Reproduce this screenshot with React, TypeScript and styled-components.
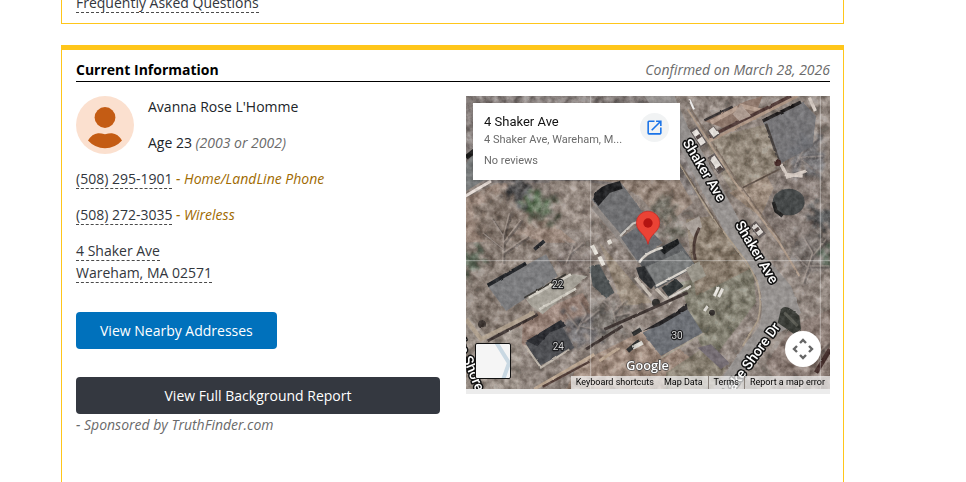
import React from "react";
import styled, { createGlobalStyle } from "styled-components";

const GlobalStyle = createGlobalStyle`
  *, *::before, *::after { box-sizing: border-box; }
  body {
    margin: 0;
    background: #fff;
    color: #212529;
    font-family: "Open Sans", "Noto Sans", sans-serif;
    font-size: 14px;
    line-height: 22px;
  }
`;

const Page = styled.main`
  display: flex;
  flex-direction: column;
  gap: 21px;
  height: 100vh;
  overflow: hidden;
  padding: 0 122px 0 61px;
`;

const Card = styled.section<{ $accent?: boolean }>`
  border: 1px solid #ffc61a;
  padding: 9px 13px 9px 14px;
  ${(p) =>
    p.$accent
      ? "flex: 1 0 auto; border-top-width: 5px; border-bottom: 0;"
      : "margin-top: -18px;"}
`;

const CardHeader = styled.header`
  display: flex;
  justify-content: space-between;
  align-items: baseline;
  border-bottom: 1px solid #000;
  margin-bottom: 14px;
`;

const CardTitle = styled.h2`
  margin: 0;
  color: #000;
  font-size: 14px;
  font-weight: 700;
`;

const Note = styled.em<{ $tone?: "gold" }>`
  color: ${(p) => (p.$tone === "gold" ? "#a06a00" : "#6a6a6a")};
`;

const DashedLink = styled.a`
  color: #32363c;
  text-decoration: none;
  border-bottom: 1px dashed #4a4a4a;
`;

const Columns = styled.div`
  display: grid;
  grid-template-columns: minmax(0, 1fr) minmax(0, 1fr);
  gap: 26px;
  align-items: start;
`;

const Details = styled.div`
  display: flex;
  flex-direction: column;
  gap: 14px;
`;

const Person = styled.div`
  display: flex;
  gap: 14px;
`;

const AvatarIcon = styled.svg`
  flex: none;
  width: 58px;
  height: 58px;
`;

const PersonLines = styled.div`
  display: flex;
  flex-direction: column;
  gap: 14px;
`;

const Line = styled.div``;

const Address = styled.address`
  font-style: normal;
`;

const Actions = styled.div`
  display: flex;
  flex-direction: column;
  align-items: flex-start;
  gap: 28px;
  margin-top: 14px;
`;

const Sponsored = styled.div`
  width: 100%;
`;

const ActionButton = styled.button<{ $dark?: boolean }>`
  display: block;
  height: 37px;
  padding: 0 24px;
  border: 0;
  border-radius: 4px;
  font: inherit;
  font-weight: 500;
  color: #fff;
  cursor: pointer;
  background: ${(p) => (p.$dark ? "#343840" : "#0071bc")};
  width: ${(p) => (p.$dark ? "100%" : "auto")};
`;

const MapFrame = styled.div`
  background: #ececec;
  padding-bottom: 5px;
`;

const MapCanvas = styled.div`
  position: relative;
  height: 293px;
  overflow: hidden;
  font-family: Roboto, sans-serif;
`;

const Satellite = styled.svg`
  display: block;
  width: 100%;
  height: 100%;
`;

const PlaceCard = styled.div`
  position: absolute;
  top: 7px;
  left: 7px;
  width: 207px;
  padding: 10px 11px 11px;
  display: flex;
  justify-content: space-between;
  background: #fff;
  box-shadow: 0 1px 4px -1px rgba(0, 0, 0, 0.3);
`;

const PlaceText = styled.div`
  min-width: 0;
  color: #6b6b6b;
  font-size: 11px;
  line-height: 18px;
`;

const PlaceName = styled.div`
  color: #111;
  font-size: 13px;
`;

const PlaceReviews = styled.div`
  margin-top: 4px;
  line-height: 16px;
`;

const OpenLink = styled.a`
  flex: none;
  display: grid;
  place-items: center;
  width: 29px;
  height: 29px;
  border-radius: 50%;
  background: #f1f3f4;
`;

const Thumbnail = styled.button`
  position: absolute;
  left: 9px;
  bottom: 10px;
  width: 36px;
  height: 36px;
  padding: 0;
  border: 1px solid #111;
  border-radius: 2px;
  overflow: hidden;
  background: #f5f5f5;
`;

const CameraButton = styled.button`
  position: absolute;
  right: 9px;
  bottom: 22px;
  width: 36px;
  height: 36px;
  padding: 0;
  border: 0;
  border-radius: 50%;
  display: grid;
  place-items: center;
  background: #fff;
`;

const Attribution = styled.div`
  position: absolute;
  right: 0;
  bottom: 0;
  display: flex;
  background: rgba(245, 245, 245, 0.7);
  font-size: 9px;
  line-height: 13px;
`;

const AttributionLink = styled.a<{ $divided?: boolean }>`
  padding: 0 5px;
  color: #000;
  text-decoration: none;
  border-left: ${(p) => (p.$divided ? "1px solid #8a827c" : "0")};
`;

const MapLabel = styled.text`
  font-family: Roboto, sans-serif;
  font-size: 42px;
  font-weight: 500;
  fill: #fff;
  stroke: #111;
  stroke-width: 9px;
  stroke-linejoin: round;
  paint-order: stroke;
  text-anchor: middle;
  dominant-baseline: central;
`;

const HouseNumber = styled(MapLabel)`
  font-size: 30px;
  font-weight: 400;
  fill: #d6d6d6;
  stroke: #1d1d1f;
  stroke-width: 7px;
`;

const Logo = styled.text`
  font-family: "Open Sans", sans-serif;
  font-size: 38px;
  font-weight: 600;
  fill: #fff;
  stroke: #444;
  stroke-width: 4px;
  paint-order: stroke;
`;

const treeSpots: [number, number, number, string][] = [
  [110, 370, 85, "#7d6e63"],
  [230, 340, 45, "#59604f"],
  [160, 285, 40, "#34373b"],
  [200, 325, 28, "#4f754e"],
  [240, 340, 14, "#4f754e"],
  [320, 500, 45, "#80746f"],
  [430, 670, 55, "#77736e"],
  [340, 700, 50, "#65656a"],
  [1030, 180, 55, "#6b6d73"],
  [1040, 470, 65, "#77706c"],
  [1070, 365, 38, "#353b3f"],
  [590, 340, 35, "#66665a"],
  [625, 400, 32, "#66665a"],
  [10, 490, 35, "#4e6550"],
  [1080, 480, 25, "#4b6351"],
];

const branches = [
  "M110 500L112 420L75 365M112 440L165 370M112 460L50 410M112 420L130 350M112 470L185 420",
  "M985 215L1010 165L995 105M1010 165L1055 125M1000 185L1070 180M1010 160L960 120M1005 190L1040 220",
  "M330 710L360 650L340 615M350 680L400 640M340 700L300 650M345 690L385 700",
  "M1010 560L1040 470L1010 420M1040 480L1080 430M1030 510L1090 510M1030 520L980 470",
  "M450 690L440 640L405 610M440 650L480 610M445 660L490 650",
  "M300 500L320 450L290 430M315 470L350 440",
  "M1060 790L1020 740M1040 760L1040 720M1050 780L1085 740",
];

function SatelliteView() {
  return (
    <Satellite
      viewBox="0 0 1092 879"
      preserveAspectRatio="xMidYMid slice"
      role="img"
      aria-label="Satellite map of 4 Shaker Ave"
    >
      <defs>
        <filter id="rough" x="0" y="0" width="1092" height="879" filterUnits="userSpaceOnUse" colorInterpolationFilters="sRGB">
          <feTurbulence type="fractalNoise" baseFrequency="0.05" numOctaves="2" seed="4" result="n" />
          <feDisplacementMap in="SourceGraphic" in2="n" scale="6" xChannelSelector="R" yChannelSelector="G" result="d" />
          <feGaussianBlur in="d" stdDeviation="1.6" />
        </filter>
        <filter id="foliage" x="-30%" y="-30%" width="160%" height="160%" colorInterpolationFilters="sRGB">
          <feTurbulence type="fractalNoise" baseFrequency="0.04" numOctaves="4" seed="9" result="n" />
          <feDisplacementMap in="SourceGraphic" in2="n" scale="120" xChannelSelector="R" yChannelSelector="G" result="d" />
          <feGaussianBlur in="d" stdDeviation="4" />
        </filter>
        <filter id="soil" x="0" y="0" width="100%" height="100%" colorInterpolationFilters="sRGB">
          <feTurbulence type="fractalNoise" baseFrequency="0.035" numOctaves="4" seed="21" />
          <feColorMatrix values="2.2 0 0 0 -0.56  2.2 0 0 0 -0.6  2.2 0 0 0 -0.62  0 0 0 0 0.27" />
        </filter>
        <filter id="grain" x="0" y="0" width="100%" height="100%" colorInterpolationFilters="sRGB">
          <feTurbulence type="fractalNoise" baseFrequency="0.07" numOctaves="3" seed="33" />
          <feColorMatrix values="1.6 0 0 0 -0.25  1.6 0 0 0 -0.27  1.6 0 0 0 -0.29  0 0 0 0 0.12" />
        </filter>
      </defs>

      <rect width="1092" height="879" fill="#93877f" />
      <g filter="url(#rough)">
        <path d="M-10 310L110 255L330 440L210 440L120 520L-10 560Z" fill="#a48c7d" />
        <path d="M-10 440L210 430L330 540L370 620L0 760Z" fill="#897c72" />
        <path d="M640 560L860 500L870 620L740 790L700 740Z" fill="#80806d" />
        <path d="M660 370L740 360L850 520L690 600Z" fill="#8b7c68" />
        <path d="M720 130L900 85L940 200L900 250L800 290L740 190Z" fill="#928674" />
        <path d="M790 290L900 235L930 290L930 370L880 360Z" fill="#a38e7b" />
        <path d="M400 440L520 580L560 620L470 630Z" fill="#9a8a76" />
        <path d="M120 690L350 590L390 660L200 780Z" fill="#997d70" />
        <path d="M340 800L560 690L690 800L640 879L300 879Z" fill="#a88e7d" />
        <path d="M600 830L720 750L780 820L740 879H600Z" fill="#8a826f" />
        <path d="M0 0H610L640 100L700 300L380 260L0 260Z" fill="#857e7d" />
        <path d="M360 250L640 250L680 320L600 390L520 300L450 260Z" fill="#978374" />
        <path d="M250 255H375V400L270 400Z" fill="#998b81" />
        <path d="M0 630L60 720L170 690L160 879H0Z" fill="#a0958b" />
        <path d="M980 690L1092 640V879H940L900 800Z" fill="#8b7971" />
        <path d="M940 240L1050 230L1092 400L980 450L880 370Z" fill="#897d77" />
      </g>

      <g filter="url(#foliage)">
        {treeSpots.map(([x, y, r, fill], i) => (
          <circle key={i} cx={x} cy={y} r={r} fill={fill} />
        ))}
      </g>
      <rect width="1092" height="879" filter="url(#soil)" />

      <g filter="url(#rough)" fill="none">
        {branches.map((d, i) => (
          <g key={i}>
            <path d={d} stroke="#3b3738" strokeOpacity="0.4" strokeWidth="6" transform="translate(5 4)" />
            <path d={d} stroke="#b7aaa2" strokeOpacity="0.6" strokeWidth="4" />
          </g>
        ))}
      </g>

      <g filter="url(#rough)">
        <path d="M535 0H625L665 90L760 260L850 430L915 500L975 570L1005 650L960 700L900 730L850 800L810 879H745L820 770L880 690Q900 610 870 540L800 450L700 270L635 140Z" fill="#989492" />
        <path d="M638 200L730 350L820 470Q905 570 875 675L830 750" fill="none" stroke="#b0a08c" strokeWidth="5" />
        <path d="M650 215L770 405" fill="none" stroke="#6b5d51" strokeWidth="4" />
        <path d="M665 40L800 250L940 440L1000 540" fill="none" stroke="#b29d8b" strokeWidth="6" />
        <path d="M675 40L810 250L945 435" fill="none" stroke="#7a6a5f" strokeWidth="4" />
        <path d="M830 275L940 220" stroke="#57493f" strokeWidth="5" />
        <path d="M0 205L22 170V245L55 252L0 285Z" fill="#777b7c" />
        <path d="M-5 302L75 255" stroke="#eee4de" strokeWidth="9" />
        <path d="M0 185L25 165" stroke="#181818" strokeWidth="15" />

        <path d="M715 75L840 15L890 0L870 50L770 95Z" fill="#8d7467" />
        <path d="M735 80L815 35M820 28L890 45L975 5" stroke="#b9a090" strokeWidth="13" fill="none" />
        <path d="M730 135L880 58L995 0" stroke="#b09684" strokeWidth="9" fill="none" />
        <path d="M730 122L880 47L975 0" stroke="#4b3330" strokeWidth="10" fill="none" />
        <path d="M715 73L800 32" stroke="#302b2c" strokeWidth="7" />
        <path d="M800 55L825 25L855 60L820 75Z" fill="#b3a095" />

        <path d="M890 75L1010 18L1050 60L1040 150L940 205L925 150Z" fill="#6c6e74" fillOpacity="0.8" />
        <path d="M890 75L1005 18" stroke="#171415" strokeWidth="10" />
        <path d="M900 83L937 190" stroke="#3e3937" strokeWidth="8" />
        <path d="M945 205L960 235L1010 240M960 245L1020 225M1030 5L1048 45" stroke="#ddd2ca" strokeWidth="10" fill="none" />
        <circle cx="935" cy="200" r="10" fill="#3a1c1a" />
        <ellipse cx="968" cy="318" rx="48" ry="40" fill="#3d4142" />
        <path d="M922 318L930 345L950 360" stroke="#171717" strokeWidth="11" fill="none" />
        <path d="M945 640Q960 620 1000 660L1005 700L985 715L935 680Z" fill="#30332e" />
        <path d="M955 650L995 690" stroke="#55574f" strokeWidth="9" />
        <path d="M1050 830L1092 760" stroke="#39211f" strokeWidth="14" />

        <path d="M377 310L465 260L535 355L460 420Z" fill="#6c6d70" />
        <path d="M382 310Q385 280 425 265L462 255L470 278L432 290L397 330Z" fill="#151619" />
        <path d="M382 330L535 510" stroke="#918a86" strokeWidth="16" />
        <path d="M465 425L530 380L590 440L515 497Z" fill="#64666b" />
        <path d="M462 420L500 383L525 375" stroke="#d4d0ca" strokeWidth="6" fill="none" />
        <path d="M520 500L575 455L635 430L690 510L570 580Z" fill="#56595c" />
        <path d="M540 512L650 465L690 510L572 570Z" fill="#777a7b" />
        <path d="M578 458L635 428L640 443L595 475Z" fill="#131618" />
        <path d="M520 500Q535 470 590 455M570 570L692 505M610 605L675 570" stroke="#e3ded7" strokeWidth="7" fill="none" />
        <path d="M510 515L535 510L568 565L555 580L520 545Z" fill="#232629" />
        <path d="M587 575L630 548L653 570L607 602Z" fill="#252b2d" />
        <path d="M660 520L700 495L720 540L680 560Z" fill="#9b978b" />
        <path d="M655 385L700 360L708 392L685 425Z" fill="#aaa19a" />
        <path d="M688 492Q675 440 700 395" stroke="#45332d" strokeWidth="9" fill="none" />
        <path d="M508 545L555 600M570 578L615 622" stroke="#ccc3b9" strokeWidth="10" />
        <circle cx="570" cy="620" r="12" fill="#282726" />

        <path d="M370 510L400 505L445 590L420 605L380 570Z" fill="#464c4e" />
        <path d="M378 448L392 475M400 482L413 508M428 432L434 444" stroke="#eeeae2" strokeWidth="12" />

        <path d="M65 570L240 475L275 540L175 610L120 645Z" fill="#7a7b7e" />
        <path d="M65 568L180 502M205 460L235 435" stroke="#181b20" strokeWidth="11" />
        <path d="M180 610L320 535L365 540L230 655L195 630Z" fill="#aaa69c" />
        <path d="M188 605L315 535M220 640L330 578" stroke="#d7d3c9" strokeWidth="8" />
        <path d="M175 605L300 535" stroke="#34322e" strokeWidth="5" />
        <path d="M65 735L215 655M415 700L665 590M360 760L470 690" stroke="#362c2a" strokeWidth="9" />
        <path d="M0 670L45 730L205 650" fill="none" stroke="#b2a28f" strokeWidth="13" />
        <circle cx="48" cy="685" r="12" fill="#332b28" />

        <path d="M178 740L280 675L325 755L220 810Z" fill="#46484d" />
        <path d="M180 735L285 672L300 690L250 710L215 750Z" fill="#202228" />
        <path d="M175 745L225 815L310 760" fill="none" stroke="#c2b9ae" strokeWidth="6" />
        <path d="M205 879L385 775M400 795L460 755" stroke="#c0aa94" strokeWidth="9" />
        <path d="M230 872L370 797" stroke="#49332d" strokeWidth="7" />

        <path d="M530 710L665 640L710 710L585 780Z" fill="#696d74" />
        <path d="M530 705L625 650L662 622L665 640L580 690Z" fill="#1b1a1d" />
        <path d="M485 765L520 735M500 715L525 700" stroke="#1e2021" strokeWidth="13" />
        <path d="M500 755L530 740" stroke="#e1dfd9" strokeWidth="13" />
        <path d="M585 785L715 712" stroke="#aaa294" strokeWidth="5" />
        <path d="M695 755L735 745L790 800L765 820Z" fill="#716970" />
        <path d="M745 600L757 575M758 603L770 578M715 645L725 630" stroke="#f1eee8" strokeWidth="9" />
        <circle cx="738" cy="650" r="9" fill="#272321" />
        <path d="M682 98L714 148M735 178L768 228M860 383L890 420M733 98L752 122" stroke="#5a5251" strokeWidth="25" />
        <path d="M685 104L712 144M738 184L763 220M864 388L885 414M735 98L750 118" stroke="#ece7e2" strokeWidth="18" />
        <path d="M694 118L700 127M757 213L766 226M870 397L876 405" stroke="#4c403e" strokeWidth="15" />
        <path d="M670 10L684 40" stroke="#fff" strokeWidth="6" />
      </g>

      <rect width="1092" height="879" filter="url(#grain)" />
      <path d="M374 0V879M1063 0V879M0 494H1092" stroke="#fff" strokeOpacity="0.38" strokeWidth="3" />

      <MapLabel transform="translate(716 222) rotate(59)">Shaker Ave</MapLabel>
      <MapLabel transform="translate(873 468) rotate(59)">Shaker Ave</MapLabel>
      <MapLabel transform="translate(855 790) rotate(-54)">Lake Shore Dr</MapLabel>
      <MapLabel transform="translate(15 810) rotate(68)">Lake Shore Dr</MapLabel>
      <HouseNumber transform="translate(275 566)">22</HouseNumber>
      <HouseNumber transform="translate(277 752)">24</HouseNumber>
      <HouseNumber transform="translate(633 719)">30</HouseNumber>
      <Logo x="481" y="822">Google</Logo>

      <path d="M546 445C541 424 532 418 521 405A35 35 0 1 1 571 405C560 418 551 424 546 445Z" fill="#ea4335" stroke="#c5221f" strokeWidth="2" />
      <circle cx="546" cy="381" r="14" fill="#b31412" />
    </Satellite>
  );
}

function Avatar() {
  return (
    <AvatarIcon viewBox="0 0 58 58" aria-hidden="true">
      <circle cx="29" cy="29" r="29" fill="#fbe0cf" />
      <circle cx="29" cy="21.5" r="10.4" fill="#c45c14" />
      <path d="M12 44.5Q16 37.8 22 37.2Q25 37 29 38.2Q33 37 36 37.2Q42 37.8 46 44.5Q39 52.2 29 52.2Q19 52.2 12 44.5Z" fill="#c45c14" />
    </AvatarIcon>
  );
}

export default function App() {
  return (
    <>
      <GlobalStyle />
      <Page>
        <Card>
          <DashedLink href="#faq">Frequently Asked Questions</DashedLink>
        </Card>

        <Card $accent>
          <CardHeader>
            <CardTitle>Current Information</CardTitle>
            <Note>Confirmed on March 28, 2026</Note>
          </CardHeader>

          <Columns>
            <Details>
              <Person>
                <Avatar />
                <PersonLines>
                  <Line>Avanna Rose L'Homme</Line>
                  <Line>
                    Age 23 <Note>(2003 or 2002)</Note>
                  </Line>
                </PersonLines>
              </Person>
              <Line>
                <DashedLink href="#phone-1">(508) 295-1901</DashedLink>{" "}
                <Note $tone="gold">- Home/LandLine Phone</Note>
              </Line>
              <Line>
                <DashedLink href="#phone-2">(508) 272-3035</DashedLink>{" "}
                <Note $tone="gold">- Wireless</Note>
              </Line>
              <Address>
                <DashedLink href="#address">
                  4 Shaker Ave
                  <br />
                  Wareham, MA 02571
                </DashedLink>
              </Address>
              <Actions>
                <ActionButton type="button">View Nearby Addresses</ActionButton>
                <Sponsored>
                  <ActionButton type="button" $dark>
                    View Full Background Report
                  </ActionButton>
                  <Note>- Sponsored by TruthFinder.com</Note>
                </Sponsored>
              </Actions>
            </Details>

            <MapFrame>
              <MapCanvas>
                <SatelliteView />
                <PlaceCard>
                  <PlaceText>
                    <PlaceName>4 Shaker Ave</PlaceName>
                    <div>4 Shaker Ave, Wareham, M...</div>
                    <PlaceReviews>No reviews</PlaceReviews>
                  </PlaceText>
                  <OpenLink href="#map" aria-label="Open in Maps">
                    <svg width="19" height="19" viewBox="0 0 24 24" fill="#1a73e8" aria-hidden="true">
                      <path d="M19 19H5V5h7V3H5a2 2 0 0 0-2 2v14a2 2 0 0 0 2 2h14c1.1 0 2-.9 2-2v-7h-2v7zM14 3v2h3.59l-9.83 9.83 1.41 1.41L19 6.41V10h2V3h-7z" />
                    </svg>
                  </OpenLink>
                </PlaceCard>
                <Thumbnail type="button" aria-label="Show street map">
                  <svg width="34" height="34" viewBox="0 0 34 34" aria-hidden="true">
                    <path d="M20 -2L33 19L27 36" fill="none" stroke="#c9d8e2" strokeWidth="4" />
                  </svg>
                </Thumbnail>
                <CameraButton type="button" aria-label="Map camera controls">
                  <svg width="22" height="22" viewBox="0 0 22 22" fill="none" stroke="#666" strokeWidth="2.4" aria-hidden="true">
                    <path d="M8 5L11 2L14 5M8 17L11 20L14 17M5 8L2 11L5 14M17 8L20 11L17 14" />
                  </svg>
                </CameraButton>
                <Attribution>
                  <AttributionLink href="#shortcuts">Keyboard shortcuts</AttributionLink>
                  <AttributionLink href="#data">Map Data</AttributionLink>
                  <AttributionLink href="#terms" $divided>Terms</AttributionLink>
                  <AttributionLink href="#report" $divided>Report a map error</AttributionLink>
                </Attribution>
              </MapCanvas>
            </MapFrame>
          </Columns>
        </Card>
      </Page>
    </>
  );
}
